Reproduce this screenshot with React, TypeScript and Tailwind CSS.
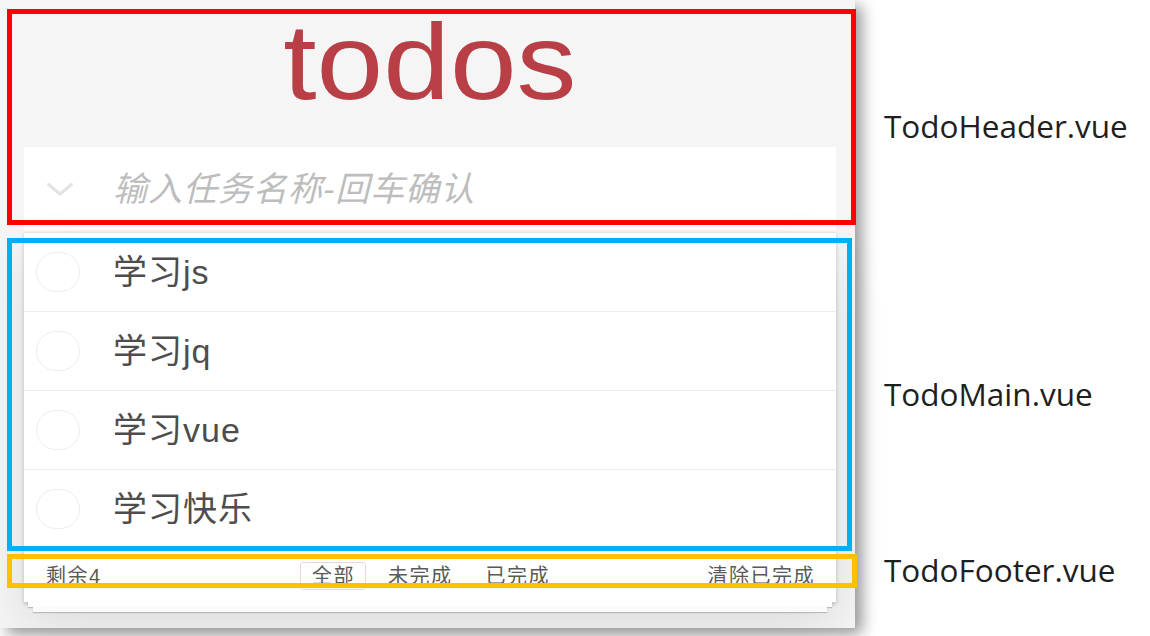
import React from "react";

const todos = ["学习js", "学习jq", "学习vue", "学习快乐"];
const filters = ["全部", "未完成", "已完成"];

const sans = "font-['Liberation_Sans','Noto_Sans_CJK_SC',sans-serif]";

function Chevron() {
  return (
    <svg width="26" height="13" viewBox="0 0 26 13" className="shrink-0">
      <polyline
        points="1.5,1.5 13,11 24.5,1.5"
        fill="none"
        stroke="#e3e3e3"
        strokeWidth="3"
        strokeLinecap="round"
        strokeLinejoin="round"
      />
    </svg>
  );
}

function TodoHeader() {
  return (
    <div>
      <h1 className="h-[107px] flex justify-center pl-[5px] text-[107px] leading-none text-[#b83f45] font-normal">
        <span className="inline-block scale-x-[1.12]">todos</span>
      </h1>
      <div className="ml-[24px] mr-[19px] mt-[31px] h-[85px] flex items-center pl-[23px] bg-white shadow-[inset_0_-2px_1px_rgba(0,0,0,0.03)]">
        <Chevron />
        <input
          className={`ml-[40px] flex-1 bg-transparent outline-none text-[34px] tracking-[1px] text-[#4d4d4d] placeholder:italic placeholder:text-[#bdbdbd] ${sans}`}
          placeholder="输入任务名称-回车确认"
        />
      </div>
    </div>
  );
}

function TodoMain() {
  return (
    <ul className="border-t border-[#e6e6e6] bg-white">
      {todos.map((t, i) => (
        <li
          key={i}
          className="h-[79px] flex items-center pl-[12px] border-b border-[#ededed]"
        >
          <span className="w-[44px] h-[40px] rounded-full border border-[#ededed] shrink-0" />
          <span className="ml-[33px] text-[34px] tracking-[1px] text-[#4d4d4d]">{t}</span>
        </li>
      ))}
    </ul>
  );
}

function TodoFooter() {
  return (
    <div className="h-[53px] grid grid-cols-[1fr_auto_1fr] items-center pl-[22px] pr-[21px] bg-white text-[20px] tracking-[1.5px] text-[#5a5a5a]">
      <span>剩余4</span>
      <div className="flex gap-[10px]">
        {filters.map((f, i) => (
          <span
            key={f}
            className={`h-[28px] flex items-center pl-[11px] pr-[10px] rounded-[3px] border ${
              i === 0 ? "border-[#efd5d5]" : "border-transparent"
            }`}
          >
            {f}
          </span>
        ))}
      </div>
      <span className="justify-self-end">清除已完成</span>
    </div>
  );
}

export default function App() {
  return (
    <div className={`relative w-[1150px] h-[636px] overflow-hidden bg-white flex ${sans}`}>
      {/* screenshot of the app */}
      <div className="w-[855px] h-[628px] shrink-0 bg-[#f5f5f5] pt-[9px] shadow-[7px_6px_14px_rgba(0,0,0,0.4)]">
        <TodoHeader />
        <div className="ml-[24px] mr-[19px] shadow-[0_2px_4px_rgba(0,0,0,0.2),0_25px_50px_rgba(0,0,0,0.1)]">
          <TodoMain />
          <TodoFooter />
        </div>
        <div className="ml-[28px] mr-[23px] h-[5px] bg-white shadow-[0_1px_1px_rgba(0,0,0,0.2)]" />
        <div className="ml-[33px] mr-[28px] h-[5px] bg-[#fbfbfb] shadow-[0_1px_1px_rgba(0,0,0,0.2)]" />
      </div>

      {/* component names */}
      <div className="pl-[29px] flex flex-col text-[31.5px] leading-[40px] text-[#1f1f1f] font-['Open_Sans',sans-serif]">
        <span className="mt-[106px]">TodoHeader.vue</span>
        <span className="mt-[228px]">TodoMain.vue</span>
        <span className="mt-[136px]">TodoFooter.vue</span>
      </div>

      {/* annotation frames */}
      <div className="absolute left-[7px] top-[9px] w-[849px] h-[216px] border-[5px] border-[#ff0000]" />
      <div className="absolute left-[7px] top-[238px] w-[845px] h-[313px] border-[5px] border-[#00b0f0]" />
      <div className="absolute left-[7px] top-[554px] w-[850px] h-[34px] border-[5px] border-[#ffc000]" />
    </div>
  );
}
